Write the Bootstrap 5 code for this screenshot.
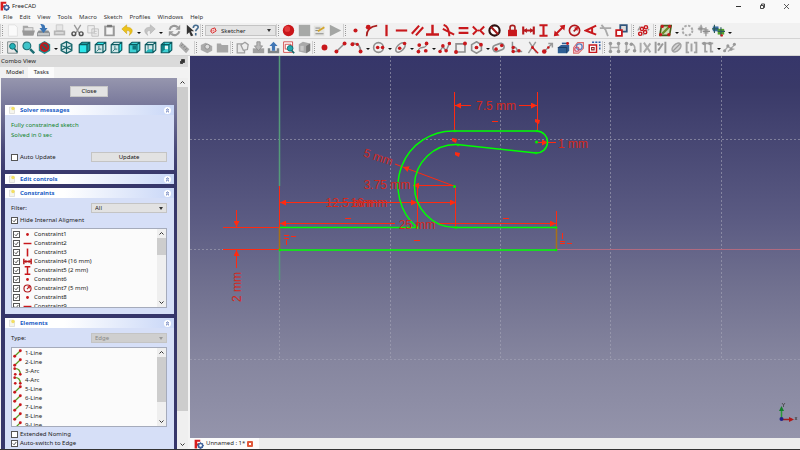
<!DOCTYPE html>
<html lang="en">
<head>
<meta charset="utf-8">
<meta name="viewport" content="width=device-width, initial-scale=1">
<title>FreeCAD</title>
<link href="https://cdn.jsdelivr.net/npm/bootstrap@5.3.0/dist/css/bootstrap.min.css" rel="stylesheet">
<style>
body{font-family:"Noto Sans","Open Sans",sans-serif;font-size:6px;line-height:9px;color:#222;background:#f9f9f9}
.app{height:100vh;border-bottom:1px solid #333}
.title-bar{height:12px;gap:2px;padding-right:2px}
.win-btn{width:24px;height:12px}
.win-btn svg{width:7px;height:7px}
.menu-bar{height:11px;gap:7px;padding-left:3px}
.menu-bar a{color:#333;text-decoration:none}
.toolbar{background:#f1f1f1;height:17px;border-bottom:1px solid #d4d4d4}
.toolbar.first{height:16px}
.tool-group{display:flex;flex:none}
.tool-group .btn{flex:1 1 0;display:flex;align-items:center;justify-content:center;line-height:0}
.tool-group svg{width:13px;height:13px}
.span-1{width:15px}.span-2{width:31px}.span-3{width:47px}.span-4{width:62px}.span-5{width:77px}
.span-6{width:93px}.span-7{width:108px}.span-8{width:124px}.span-10{width:154px}
.caret-btn{width:7px;flex:none;line-height:0}
.caret-btn::after{content:"";display:inline-block;border:2px solid transparent;border-top-color:#111;border-bottom:0}
.tool-gap{width:3px;flex:none}
.tool-pad{width:2px;flex:none}
.grip{width:5px;flex:none;height:13px;border-left:1px solid #d0d0d0}
.grip::after{content:"";display:block;height:11px;margin:1px 0 0 1px;border-left:1px dotted #999}
.wb{width:71px;height:11px;flex:none;background:#e4e4e4;border:1px solid #c4c4c4}
.plain-select{appearance:none;border:0;background:transparent;color:#222;font-size:6px;line-height:8px;padding:0;min-width:0;outline:0}
.drop{width:0;height:0;border:2px solid transparent;border-top:3px solid #333;border-bottom:0;flex:none}
.side{width:190px;background:#f3f3f3;padding-right:2px}
.side-head{background:#dadada;height:11px;padding:0 3px 0 1px}
.side-tabs{height:11px;background:#f2f2f2}
.side-tabs button{border:0;background:transparent;padding:0 4px 0 6px;line-height:11px;color:#222}
.side-tabs button.on{background:#fbfbfb;padding:0 5px 0 6px}
.task-area{margin-left:1px;padding:8px 3px 0 4px;background:linear-gradient(#9696ae 0,#8080a0 20px,#4a4a7a 70px,#36366a 100px)}
.flat-btn{background:#e3e3e3;border:1px solid #c8c8c8;color:#111;font-size:6px;line-height:9px;padding:0;border-radius:0}
.close-btn{width:38px;margin-left:65px}
.panel-box{margin-bottom:4px}
.panel-head{height:10px;background:linear-gradient(90deg,#fff 0 35%,#c9d7f7);color:#215dc6;font-weight:700;padding:0 3px;gap:4px}
.panel-head svg{width:8px;height:8px}
.panel-head button{width:7px;height:7px;border:0;border-radius:50%;background:#fff;padding:0;line-height:0}
.panel-head button svg{width:5px;height:5px;display:block;margin:auto}
.panel-main{background:#d6dff7;padding:5px 7px 6px 6px}
.solver-main{padding-bottom:8px}
.tick-row{display:flex;align-items:center;gap:2px}
.tick-row.hide-row{margin:3px 0}
.tick-row.after-list{margin-top:3px}
.ok-text{color:#11852b;line-height:10px}
.tick{appearance:none;width:7px;height:7px;flex:none;border:1px solid #555;background:#fff;margin:0}
.tick:checked{background:#fff url("data:image/svg+xml,%3Csvg xmlns='http://www.w3.org/2000/svg' viewBox='0 0 7 7'%3E%3Cpath d='M1.5 3.5 3 5 5.6 1.7' fill='none' stroke='%23222' stroke-width='.9'/%3E%3C/svg%3E") center/6px}
.field{width:76px;height:10px;background:#e2e2e2;border:1px solid #c4c4c4;padding:0 3px}
.field.off{background:#cfcfcf}.field.off select{color:#888}.field.off .drop{border-top-color:#999}
.list-box{height:80px;border:1px solid #a5abbb;background:#fbfbfb}
.list-box ul{padding:1px 0 0 1px}
.list-box li{height:9px;gap:3px}
.list-box label{display:flex;align-items:center;gap:2px}
.list-box svg.ico{width:9px;height:9px;flex:none}
.scroll{width:9px;background:#efefef;flex:none}
.scroll svg{width:9px;height:9px;flex:none}
.thumb{background:#cdcdcd;flex:none}
.thumb.short{height:17px}.thumb.mid{height:45px}
.main-scroll{width:11px;background:#efefef}
.main-scroll svg{width:9px;height:9px;margin:0 auto}
.main-scroll .thumb{flex:0 1 324px}
.canvas{background:linear-gradient(#36366a,#393968 8%,#5a5a82 42%,#70708f 60%,#86869f 80%,#9494ab)}
.canvas svg{display:block}
.doc-tabs{height:11px;background:#ededed}
.doc-tab{background:#fbfbfb;padding:0 6px 0 4px;gap:2px;color:#222}
.doc-tab button{width:6px;height:6px;border:0;border-radius:1px;background:#e0593c;padding:0;line-height:0}
.logo{width:10px;height:10px}
.dim{font:12px "Liberation Sans",Arial,sans-serif;fill:#d4281c;text-anchor:middle}
</style>
<script src="https://cdn.jsdelivr.net/npm/bootstrap@5.3.0/dist/js/bootstrap.bundle.min.js"></script>
</head>
<body>
<svg class="d-none" aria-hidden="true">
<defs>
<g id="cube"><path d="M1.500 4.500 5 1.500h9.500v9.500L11 14.500H1.500z" fill="#3fd0d4"/></g>
<g id="cubeline" fill="none" stroke="#0b5a60" stroke-width="1.400"><path d="M1.500 4.500 5 1.500h9.500v9.500L11 14.500H1.500zM1.500 4.500H11v10M11 4.500l3.500-3"/></g>
</defs>
<symbol id="i-logo" viewBox="0 0 16 16"><path d="M1 1h9v3.500H5V7h3v3H5v5H1z" fill="#d81e1e"/><circle cx="10.500" cy="10.500" r="3.400" fill="none" stroke="#42639c" stroke-width="2.600"/><path d="M10.500 5v11M5 10.500h11M6.600 6.600l7.800 7.800M14.400 6.600l-7.800 7.800" stroke="#42639c" stroke-width="1.400"/><circle cx="10.500" cy="10.500" r="2" fill="#fff"/></symbol>
<symbol id="i-new" viewBox="0 0 16 16"><path d="M3 1h8l3 3v11H3z" fill="#fafafa" stroke="#dcdcdc"/></symbol>
<symbol id="i-open" viewBox="0 0 16 16"><path d="M1 2h6l1 2h6v10H1z" fill="#a8a8a8"/><path d="M3 5h10v4H3z" fill="#ddd"/><path d="M0 8h16l-2 6H2z" fill="#989898"/></symbol>
<symbol id="i-save" viewBox="0 0 16 16"><path d="M2 8h12l2 3v4H0v-4z" fill="#8b8f92"/><path d="M1 11h14v3H1z" fill="#c2c5c6"/><path d="M4 0c4 0 6 1 6 5h3l-5 6-5-6h3c0-2-1-3-2-5z" fill="#3a74b4"/></symbol>
<symbol id="i-print" viewBox="0 0 16 16"><path d="M4 1h8v7H4z" fill="#e6e6e6" stroke="#c5c5c5"/><path d="M1 8h14v6H1z" fill="#b5b5b5"/><path d="M3 10h10v2H3z" fill="#ddd"/></symbol>
<symbol id="i-cut" viewBox="0 0 16 16"><path d="M4 1l6 10M12 1 6 11" stroke="#999" stroke-width="1.600"/><g fill="none" stroke="#555" stroke-width="1.800"><circle cx="3.500" cy="12" r="2.300"/><circle cx="12.500" cy="12" r="2.300"/></g></symbol>
<symbol id="i-copy" viewBox="0 0 16 16"><path d="M1 2h8v9H1zM6 6h8v9H6z" fill="#eee" stroke="#b9b9b9"/><path d="M8 9h4M8 12h4" stroke="#bbb"/></symbol>
<symbol id="i-paste" viewBox="0 0 16 16"><path d="M1.500 2h13v13h-13z" fill="#999"/><path d="M4 4h8v9H4z" fill="#f5f5f5"/><path d="M5 1h6v3H5z" fill="#777"/></symbol>
<symbol id="i-undo" viewBox="0 0 16 16"><path d="M7 1 1 6l6 6V8c4 0 5 2 3 6 6-4 5-10-3-10z" fill="#ecc21a" stroke="#c79b08" stroke-width=".6"/></symbol>
<symbol id="i-redo" viewBox="0 0 16 16"><path d="M9 1l6 5-6 6V8c-4 0-5 2-3 6C0 10 1 4 9 4z" fill="#c4c4c4" stroke="#aaa" stroke-width=".6"/></symbol>
<symbol id="i-refresh" viewBox="0 0 16 16"><path d="M2 7a6 6 0 0 1 10-3M14 9a6 6 0 0 1-10 3" fill="none" stroke="#999" stroke-width="2.600"/><path d="M15 1v6H9zM1 15V9h6z" fill="#999"/></symbol>
<symbol id="i-help" viewBox="0 0 16 16"><path d="M1 1l9 8H6l3 5-3 1-2-5-3 3z" fill="#333"/><path d="M9 5c0-5 6-4 6-1 0 2-3 2-3 5M12 11v3" fill="none" stroke="#456c90" stroke-width="2"/></symbol>
<symbol id="i-sketcher" viewBox="0 0 16 16"><path d="M3 5l8-3 3 7-8 5-4-3z" fill="#fff" stroke="#d32020" stroke-width="2.200"/><path d="M2 9h7V5" fill="none" stroke="#d32020" stroke-width="1.500"/></symbol>
<symbol id="i-record" viewBox="0 0 16 16"><circle cx="8" cy="8" r="7" fill="#c91519"/><circle cx="6.500" cy="6" r="3.500" fill="#e2383a"/></symbol>
<symbol id="i-stop" viewBox="0 0 16 16"><path d="M1 1h14v14H1z" fill="#a7a9a7"/></symbol>
<symbol id="i-edit" viewBox="0 0 16 16"><path d="M1 2h13v13H1z" fill="#e4e4e0"/><path d="M3 5h6M3 8h4M3 12h10" stroke="#777"/><path d="M6 9l8-5" stroke="#d4a52c" stroke-width="2.200"/></symbol>
<symbol id="i-play" viewBox="0 0 16 16"><path d="M1 1l14 7-14 7z" fill="#a4a6a4"/></symbol>
<symbol id="i-pt" viewBox="0 0 16 16"><circle cx="8" cy="8" r="2.500" fill="#c8181c"/></symbol>
<symbol id="i-ptbig" viewBox="0 0 16 16"><circle cx="8" cy="8" r="3.600" fill="#c8181c"/></symbol>
<symbol id="i-onobj" viewBox="0 0 16 16"><path d="M2 15C2 8 6 3 15 2" fill="none" stroke="#a81c1c" stroke-width="2"/><circle cx="4" cy="4" r="3" fill="#c8181c"/></symbol>
<symbol id="i-vert" viewBox="0 0 16 16"><path d="M8 1v14" stroke="#c8181c" stroke-width="2.800"/></symbol>
<symbol id="i-hor" viewBox="0 0 16 16"><path d="M1 8h14" stroke="#c8181c" stroke-width="2.600"/></symbol>
<symbol id="i-par" viewBox="0 0 16 16"><path d="M1 12 10 2M6 14l9-10" stroke="#c8181c" stroke-width="2.600"/></symbol>
<symbol id="i-perp" viewBox="0 0 16 16"><path d="M8 1v12M0 13h16" stroke="#c8181c" stroke-width="3"/></symbol>
<symbol id="i-tan" viewBox="0 0 16 16"><path d="M2 1c6 2 7 7 7 14M1 6l14 7" fill="none" stroke="#c8181c" stroke-width="2.400"/></symbol>
<symbol id="i-eq" viewBox="0 0 16 16"><path d="M2 5h12M2 11h12" stroke="#c8181c" stroke-width="2.800"/></symbol>
<symbol id="i-sym" viewBox="0 0 16 16"><path d="M1 3l5 5-5 5M15 3l-5 5 5 5" fill="none" stroke="#c8181c" stroke-width="2.400"/><circle cx="8" cy="8" r="1.200" fill="#c8181c"/></symbol>
<symbol id="i-block" viewBox="0 0 16 16"><circle cx="8" cy="8" r="6.300" fill="#fff" stroke="#2c1010" stroke-width="2.600"/><path d="M3.500 3.500l9 9" stroke="#a31818" stroke-width="2.600"/></symbol>
<symbol id="i-lock" viewBox="0 0 16 16"><path d="M5 8V4c0-3 6-3 6 0v4" fill="none" stroke="#a81c1c" stroke-width="2"/><path d="M2.500 7h11v8h-11z" fill="#c8181c"/></symbol>
<symbol id="i-hd" viewBox="0 0 16 16"><path d="M1.500 3v10M14.500 3v10M2 8h12" stroke="#b8181c" stroke-width="2.600"/><path d="M2 8l4-3v6zM14 8l-4-3v6z" fill="#b8181c"/></symbol>
<symbol id="i-vd" viewBox="0 0 16 16"><path d="M3 1.500h10M3 14.500h10M8 2v12" stroke="#c8181c" stroke-width="2.600"/></symbol>
<symbol id="i-dist" viewBox="0 0 16 16"><path d="M4 12l8-8" stroke="#c8181c" stroke-width="2.400"/><path d="M1 15l1-7 6 6zM15 1l-1 7-6-6z" fill="#c8181c"/></symbol>
<symbol id="i-rad" viewBox="0 0 16 16"><circle cx="8" cy="8" r="6.300" fill="none" stroke="#b0181c" stroke-width="2"/><path d="M7 9l4-4" stroke="#b0181c" stroke-width="2"/><path d="M12.500 3.500l-1 5-4-4z" fill="#c8181c"/></symbol>
<symbol id="i-ang" viewBox="0 0 16 16"><path d="M15 2 2 8l13 5M10 5v6" fill="none" stroke="#c8181c" stroke-width="2.400"/></symbol>
<symbol id="i-snell" viewBox="0 0 16 16"><path d="M1 5h14M3 1l5 6 3 8" fill="none" stroke="#a9a9a9" stroke-width="2.200"/></symbol>
<symbol id="i-toggle" viewBox="0 0 16 16"><path d="M6.500 1.500h8v8h-8z" fill="#ddd" stroke="#31557c" stroke-width="2.200"/><path d="M1.500 7.500h7v7h-7z" fill="#fff" stroke="#c8181c" stroke-width="2.200"/></symbol>
<symbol id="i-chain" viewBox="0 0 16 16"><g fill="none" stroke="#c8181c" stroke-width="1.800"><circle cx="11" cy="4" r="2"/><circle cx="6" cy="6" r="2"/><circle cx="10" cy="10" r="2"/><circle cx="4" cy="12" r="2"/></g><path d="M13 8l2-2M7 14l2-2M1 8l3-5" stroke="#999" stroke-width="1.500"/></symbol>
<symbol id="i-map" viewBox="0 0 16 16"><path d="M3 2h12l-2 12H1z" fill="#cfdcb8" stroke="#485d1c" stroke-width="2"/><path d="M4 12l8-8" stroke="#6b8c2c" stroke-width="3"/><g fill="#c8181c"><circle cx="4" cy="3" r="2"/><circle cx="13" cy="3" r="2"/><circle cx="12" cy="13" r="2"/><circle cx="2" cy="13" r="2"/></g></symbol>
<symbol id="i-ring" viewBox="0 0 16 16"><circle cx="8" cy="8" r="6" fill="none" stroke="#a9a9a9" stroke-width="2.400" stroke-dasharray="3 1.700"/></symbol>
<symbol id="i-swap" viewBox="0 0 16 16"><path d="M2 3h5v5H2zM8 6h6v6H8z" fill="#b5b5b5"/><path d="M1 6h9M5 1v10M7 9h9M11 4v11" stroke="#8f8f8f" stroke-width="1.500"/></symbol>
<symbol id="i-swapc" viewBox="0 0 16 16"><path d="M1 3h7v6H1z" fill="#3a6ea8"/><path d="M7 6h8v7H7z" fill="#55a02c"/><path d="M3 1v10M7 9h9M11 4v11M0 6h8" stroke="#2b5b5c" stroke-width="1.400"/><circle cx="12" cy="14" r="1.500" fill="#c8181c"/></symbol>
<symbol id="i-fit" viewBox="0 0 16 16"><path d="M2 1h12v14H2z" fill="#e8e8e8" stroke="#6e7a7a"/><circle cx="8" cy="6.500" r="3.600" fill="#23b2b8" stroke="#0b5a60"/><path d="M10.500 9.500 14 14" stroke="#0b5a60" stroke-width="2"/></symbol>
<symbol id="i-zoom" viewBox="0 0 16 16"><circle cx="6" cy="6" r="4.800" fill="#3fc4ca" stroke="#1c6e74" stroke-width="1.400"/><path d="M10 10l5 5" stroke="#1c6e74" stroke-width="3"/></symbol>
<symbol id="i-style" viewBox="0 0 16 16"><path d="M8 0l7 4v8l-7 4-7-4V4z" fill="#218b90"/><circle cx="8" cy="7.500" r="4.800" fill="#3a5a5c" stroke="#c2191d" stroke-width="2.200"/><path d="M4.500 4.500l7 6" stroke="#c2191d" stroke-width="2.200"/></symbol>
<symbol id="i-iso" viewBox="0 0 16 16"><path d="M8 .8l6.500 3.400v7.600L8 15.200l-6.500-3.400V4.200z" fill="#d4e9ea" stroke="#17656b" stroke-width="1.700"/><path d="M8 1v14M1.500 5.500 8 8l6.500-2.500M1.500 11 8 8l6.500 3" fill="none" stroke="#17656b" stroke-width="1.400"/></symbol>
<symbol id="i-front" viewBox="0 0 16 16"><path d="M1.500 4.500 5 1.500h9.500v9.500L11 14.500H1.500z" fill="#1a9a9f"/><path d="M1.500 4.500H11v10H1.500z" fill="#2ee6ea"/><use href="#cubeline"/></symbol>
<symbol id="i-top" viewBox="0 0 16 16"><path d="M1.500 4.500 5 1.500h9.500v9.500L11 14.500H1.500z" fill="#cfe6e7"/><path d="M1.500 4.500 5 1.500h9.500l-3.500 3z" fill="#2ee6ea"/><use href="#cubeline"/><path d="M3 13l3-3V6M6 10h3" stroke="#17656b" fill="none"/></symbol>
<symbol id="i-right" viewBox="0 0 16 16"><path d="M1.500 4.500 5 1.500h9.500v9.500L11 14.500H1.500z" fill="#cfe6e7"/><path d="M11 4.500l3.500-3v9.500L11 14.500z" fill="#2ee6ea"/><use href="#cubeline"/><path d="M3 13l3-3V6M6 10h3" stroke="#17656b" fill="none"/></symbol>
<symbol id="i-rear" viewBox="0 0 16 16"><use href="#cube"/><path d="M5.500 5.500H10v5H5.500z" fill="#0d767b"/><use href="#cubeline"/></symbol>
<symbol id="i-bottom" viewBox="0 0 16 16"><path d="M1.500 4.500 5 1.500h9.500v9.500L11 14.500H1.500z" fill="#d3e8e9"/><path d="M1.500 14.500 5 10h6v4.500z" fill="#25b8bd"/><use href="#cubeline"/><path d="M5 10V5" stroke="#17656b"/></symbol>
<symbol id="i-left" viewBox="0 0 16 16"><use href="#cube"/><path d="M2 14V5l4-3v8z" fill="#0e8589"/><path d="M6 6h4v4H6z" fill="#e5f4f4"/><use href="#cubeline"/></symbol>
<symbol id="i-measure" viewBox="0 0 16 16"><path d="M4 1l10 9-4 5L1 6z" fill="#aaa"/><path d="M6 4L4 6M9 6 7 8M11 9l-2 2" stroke="#777"/></symbol>
<symbol id="i-part" viewBox="0 0 16 16"><path d="M1 5l6-3 8 4v6l-6 3-8-4z" fill="#aaa"/><circle cx="9" cy="7" r="3" fill="#ddd" stroke="#888"/></symbol>
<symbol id="i-folder" viewBox="0 0 16 16"><path d="M1 3h5l1 2h8v9H1z" fill="#a6a6a6"/></symbol>
<symbol id="i-nsk" viewBox="0 0 16 16"><path d="M1.500 3.500h9v11h-9z" fill="#e8e8e8" stroke="#a0a0a0" stroke-width="1.600"/><path d="M6 5l5-3.500 4 3-1 6-5 1z" fill="#eee" stroke="#a0a0a0" stroke-width="1.600"/></symbol>
<symbol id="i-edsk" viewBox="0 0 16 16"><path d="M1 9h14v6H1z" fill="#a0a0a0"/><path d="M6 1h4v5h3l-5 6-5-6h3z" fill="#b8b8b8" stroke="#8a8a8a"/></symbol>
<symbol id="i-leave" viewBox="0 0 16 16"><path d="M1 9h3v3h8V9h3v6H1z" fill="#7f8587"/><path d="M8 1l5 5h-3v6H6V6H3z" fill="#4177b5"/></symbol>
<symbol id="i-view" viewBox="0 0 16 16"><path d="M2 1h11v13H2z" fill="#fff" stroke="#c33"/><path d="M4 4h7v6H4z" fill="none" stroke="#c33"/><circle cx="10" cy="9" r="3.500" fill="#24a9ae" stroke="#0e6267"/><path d="M12 12l3 3" stroke="#0e6267" stroke-width="2"/></symbol>
<symbol id="i-sect" viewBox="0 0 16 16"><path d="M1 4l5-3 9 2v9l-5 3-9-2z" fill="#aaa"/><path d="M10 6v9l5-3V3z" fill="#777"/><path d="M3 6h4v6H3z" fill="#c9c9c9"/></symbol>
<symbol id="i-line" viewBox="0 0 16 16"><path d="M3 13 13 3" stroke="#8f8f8f" stroke-width="1.800"/><circle cx="3" cy="13" r="2.400" fill="#c8181c"/><circle cx="13" cy="3" r="2.400" fill="#c8181c"/></symbol>
<symbol id="i-arc" viewBox="0 0 16 16"><path d="M3 3c7-1 10 4 10 10" fill="none" stroke="#8f8f8f" stroke-width="2"/><g fill="#c8181c"><circle cx="3" cy="4" r="2.400"/><circle cx="9" cy="4" r="2"/><circle cx="13" cy="13" r="2.400"/></g></symbol>
<symbol id="i-gline" viewBox="0 0 16 16"><path d="M3 13 13 3" stroke="#5a9a20" stroke-width="2.200"/><circle cx="3" cy="13" r="2.600" fill="#c8181c"/><circle cx="13" cy="3" r="2.600" fill="#c8181c"/></symbol>
<symbol id="i-garc" viewBox="0 0 16 16"><path d="M3 3c7-1 10 4 10 10" fill="none" stroke="#5a9a20" stroke-width="2.200"/><g fill="#c8181c"><circle cx="3" cy="3" r="2.400"/><circle cx="4" cy="13" r="2.400"/><circle cx="13" cy="13" r="2.400"/></g></symbol>
<symbol id="i-circle" viewBox="0 0 16 16"><circle cx="8" cy="8" r="6" fill="none" stroke="#8f8f8f" stroke-width="2"/><circle cx="7" cy="8" r="2.200" fill="#c8181c"/><circle cx="13" cy="8" r="2.200" fill="#c8181c"/></symbol>
<symbol id="i-ellipse" viewBox="0 0 16 16"><ellipse cx="8" cy="8" rx="7" ry="4" transform="rotate(-45 8 8)" fill="none" stroke="#8f8f8f" stroke-width="2"/><g fill="#c8181c"><circle cx="13" cy="3" r="2.200"/><circle cx="7" cy="9" r="2.200"/></g></symbol>
<symbol id="i-spline" viewBox="0 0 16 16"><path d="M3 13C3 4 13 12 13 3" fill="none" stroke="#8f8f8f" stroke-width="1.600"/><g fill="#c8181c"><circle cx="3" cy="13" r="2.300"/><circle cx="13" cy="3" r="2.300"/><circle cx="4" cy="5" r="2.300"/><circle cx="12" cy="12" r="2.300"/></g></symbol>
<symbol id="i-poly" viewBox="0 0 16 16"><path d="M2 13l4-6 4 5 4-9" fill="none" stroke="#8f8f8f" stroke-width="1.800"/><g fill="#c8181c"><circle cx="2.500" cy="13" r="2.200"/><circle cx="6" cy="6" r="2.200"/><circle cx="10" cy="12" r="2.200"/><circle cx="14" cy="3" r="2.200"/></g></symbol>
<symbol id="i-rect" viewBox="0 0 16 16"><path d="M2.500 3.500h11v10h-11z" fill="none" stroke="#8f8f8f" stroke-width="2"/><circle cx="13.500" cy="3" r="2.400" fill="#c8181c"/><circle cx="2.500" cy="13.500" r="2.400" fill="#c8181c"/></symbol>
<symbol id="i-hex" viewBox="0 0 16 16"><path d="M8 1l6 3.500v7L8 15l-6-3.500v-7z" fill="none" stroke="#8f8f8f" stroke-width="2"/><circle cx="8" cy="8" r="2.300" fill="#c8181c"/><circle cx="13.500" cy="4.500" r="2.300" fill="#c8181c"/></symbol>
<symbol id="i-slot" viewBox="0 0 16 16"><rect x="1" y="4" width="14" height="8" rx="4" transform="rotate(-20 8 8)" fill="none" stroke="#8f8f8f" stroke-width="2"/><circle cx="5" cy="10" r="2.200" fill="#c8181c"/><circle cx="12" cy="5.500" r="2.200" fill="#c8181c"/></symbol>
<symbol id="i-fillet" viewBox="0 0 16 16"><path d="M3 1v12h12M3 7c4 0 6 2 6 6" fill="none" stroke="#8f8f8f" stroke-width="1.800"/><circle cx="4" cy="8" r="2.100" fill="#c8181c"/><circle cx="4" cy="13" r="2.100" fill="#c8181c"/><circle cx="11" cy="12" r="2.100" fill="#c8181c"/></symbol>
<symbol id="i-trim" viewBox="0 0 16 16"><path d="M3 15 12 1M13 15 4 1" stroke="#999" stroke-width="1.800"/><path d="M8 8l7 7" stroke="#c8181c" stroke-width="1.600"/><circle cx="8" cy="8" r="1.800" fill="#c8181c"/></symbol>
<symbol id="i-extend" viewBox="0 0 16 16"><path d="M4 13 13 4M9 3h5v5" fill="none" stroke="#999" stroke-width="1.800"/><circle cx="4" cy="13" r="2.800" fill="#c8181c"/><circle cx="9" cy="8" r="1.600" fill="#c8181c"/></symbol>
<symbol id="i-ext" viewBox="0 0 16 16"><path d="M1 8l4-3h10v7l-3 3H1z" fill="#2f5f94"/><path d="M1 8h11v7" fill="none" stroke="#17365a"/><path d="M6 3h8" stroke="#2f5f94" stroke-width="2"/><circle cx="13" cy="3" r="1.800" fill="#c8181c"/></symbol>
<symbol id="i-carbon" viewBox="0 0 16 16"><path d="M2 8l5-6h7v7l-6 6H2z" fill="#f3e6ec" stroke="#dd6b6b" stroke-width="1.400"/><circle cx="9" cy="7" r="3.500" fill="none" stroke="#5a80c0" stroke-width="1.600"/><circle cx="6" cy="10" r="2.600" fill="none" stroke="#d0506a" stroke-width="1.400"/></symbol>
<symbol id="i-constr" viewBox="0 0 16 16"><path d="M5 1.500h9.500V11" fill="none" stroke="#2c5fa8" stroke-width="1.800" stroke-dasharray="2.500 1.500"/><path d="M1.500 5h9v9h-9z" fill="#fff" stroke="#c8181c" stroke-width="1.800"/><path d="M4.500 8h3v3h-3z" fill="none" stroke="#8a2020" stroke-width="1.400"/></symbol>
<symbol id="i-g1" viewBox="0 0 16 16"><path d="M3 2v12M13 2v12M3 8h10" stroke="#aaa" stroke-width="2"/><g fill="#999"><circle cx="3" cy="3" r="2.200"/><circle cx="13" cy="3" r="2.200"/><circle cx="3" cy="13" r="2.200"/><circle cx="13" cy="13" r="2.200"/></g></symbol>
<symbol id="i-g2" viewBox="0 0 16 16"><path d="M3 2v12M3 13l4-3M9 3c4 1 5 5 4 9" fill="none" stroke="#aaa" stroke-width="2"/><g fill="#999"><circle cx="3" cy="3" r="2.200"/><circle cx="9" cy="4" r="2.200"/><circle cx="3" cy="13" r="2.200"/><circle cx="13" cy="12" r="2.200"/></g></symbol>
<symbol id="i-g3" viewBox="0 0 16 16"><path d="M2 2v12M6 2l8 12M6 14l8-11" stroke="#aaa" stroke-width="2.400"/></symbol>
<symbol id="i-g4" viewBox="0 0 16 16"><path d="M2 1v14M14 1v14M5 12l6-9" stroke="#999" stroke-width="2.400"/><circle cx="6" cy="4" r="1.800" fill="#999"/></symbol>
<symbol id="i-g5" viewBox="0 0 16 16"><ellipse cx="8" cy="8" rx="6.500" ry="4" transform="rotate(-45 8 8)" fill="#d5d5d5" stroke="#a3a3a3" stroke-width="2"/><path d="M4 12l8-8" stroke="#999" stroke-width="1.500"/></symbol>
<symbol id="i-g6" viewBox="0 0 16 16"><path d="M5 2H2v12h3M11 2h3v12h-3M8 3v10" fill="none" stroke="#a2a2a2" stroke-width="2.400"/></symbol>
<symbol id="i-g7" viewBox="0 0 16 16"><path d="M1 3h14M5 3v10h3M12 3v10h3" fill="none" stroke="#a2a2a2" stroke-width="2.200"/><circle cx="4" cy="3" r="2.200" fill="#999"/><circle cx="11" cy="3" r="2.200" fill="#999"/></symbol>
<symbol id="i-g8" viewBox="0 0 16 16"><path d="M2 12l4-5 4 2 5-5M6 13l4-3 4 0" fill="none" stroke="#aaa" stroke-width="1.600"/><g fill="#999"><circle cx="2" cy="12" r="1.900"/><circle cx="6" cy="6" r="1.900"/><circle cx="10" cy="10" r="1.900"/><circle cx="14" cy="4" r="1.900"/></g></symbol>
<symbol id="i-note" viewBox="0 0 16 16"><path d="M3 2h8l2 2v11H3z" fill="#f5f5ee" stroke="#c9c9c9"/><circle cx="10" cy="5" r="3.500" fill="#f3df62"/></symbol>
<symbol id="i-fold" viewBox="0 0 10 10"><path d="M2 4.500 5 2l3 2.500M2 8.500 5 6l3 2.500" fill="none" stroke="#21409c" stroke-width="1.500"/></symbol>
<symbol id="i-up" viewBox="0 0 9 9"><path d="M2.500 5.500 4.500 3.500l2 2" fill="none" stroke="#333"/></symbol>
<symbol id="i-down" viewBox="0 0 9 9"><path d="M2.500 3.500l2 2 2-2" fill="none" stroke="#333"/></symbol>
</svg>

<div class="app d-flex flex-column overflow-hidden">
  <header class="title-bar d-flex align-items-center flex-shrink-0">
    <svg class="logo"><use href="#i-logo"/></svg><span>FreeCAD</span>
    <div class="ms-auto d-flex">
      <button class="btn p-0 border-0 win-btn d-flex align-items-center justify-content-center" aria-label="Minimize"><svg viewBox="0 0 7 7"><path d="M1 3.500h5" stroke="#333"/></svg></button>
      <button class="btn p-0 border-0 win-btn d-flex align-items-center justify-content-center" aria-label="Restore"><svg viewBox="0 0 7 7"><path d="M1.500 2.500h3v3h-3zM2.500 2V1h3v3.500H5" fill="none" stroke="#333" stroke-width=".9"/></svg></button>
      <button class="btn p-0 border-0 win-btn d-flex align-items-center justify-content-center" aria-label="Exit"><svg viewBox="0 0 7 7"><path d="M1 1l5 5M6 1 1 6" stroke="#333" stroke-width=".8"/></svg></button>
    </div>
  </header>
  <nav class="menu-bar d-flex align-items-center flex-shrink-0">
    <a href="#">File</a><a href="#">Edit</a><a href="#">View</a><a href="#">Tools</a><a href="#">Macro</a><a href="#">Sketch</a><a href="#">Profiles</a><a href="#">Windows</a><a href="#">Help</a>
  </nav>
  <div class="toolbar first d-flex align-items-center flex-shrink-0" role="toolbar" aria-label="File and constraints">
    <div class="d-flex align-items-center" data-tools="grip new+open+save+print gap cut+copy+paste gap undo caret redo caret gap refresh gap help grip"></div>
    <div class="wb d-flex align-items-center px-1 gap-1"><svg width="7" height="7"><use href="#i-sketcher"/></svg><select class="plain-select flex-grow-1" aria-label="Workbench"><option>Sketcher</option></select><span class="drop"></span></div>
    <div class="d-flex align-items-center" data-tools="grip record+stop+edit+play grip pt+onobj+vert+hor+par+perp+tan+eq+sym+block gap lock+hd+vd+dist+rad+ang+snell+toggle pad grip chain pad grip map caret ring+swap swapc caret"></div>
  </div>
  <div class="toolbar d-flex align-items-center flex-shrink-0" role="toolbar" aria-label="View and geometry">
    <div class="d-flex align-items-center" data-tools="grip fit+zoom+style caret iso gap front+top+right gap rear+bottom+left gap measure pad grip part+folder grip nsk+edsk+leave+view+sect grip ptbig+line+arc caret circle caret ellipse caret spline caret poly+rect+hex caret slot gap fillet+trim+extend+ext+carbon+constr grip g1+g2+g3+g4+g5+g6+g7 caret g8"></div>
  </div>

  <div class="d-flex flex-grow-1 overflow-hidden">
    <aside class="side d-flex flex-column flex-shrink-0">
      <div class="side-head d-flex align-items-center justify-content-between flex-shrink-0"><span>Combo View</span><svg width="5" height="5" viewBox="0 0 5 5"><path d="M1.500.5h3v3h-3zM.5 2v2.500H3" fill="#333" stroke="#333" stroke-width=".8"/></svg></div>
      <div class="side-tabs d-flex flex-shrink-0"><button type="button">Model</button><button type="button" class="on">Tasks</button></div>
      <div class="d-flex flex-grow-1 overflow-hidden">
        <div class="task-area flex-grow-1 overflow-hidden">
          <button class="flat-btn close-btn d-block mb-2" type="button">Close</button>
          <section class="panel-box">
            <div class="panel-head d-flex align-items-center"><svg><use href="#i-note"/></svg><span class="flex-grow-1">Solver messages</span><button type="button" aria-label="Collapse"><svg><use href="#i-fold"/></svg></button></div>
            <div class="panel-main solver-main">
              <div class="ok-text">Fully constrained sketch</div><div class="ok-text">Solved in 0 sec</div>
              <div class="d-flex align-items-center justify-content-between mt-2 pt-1"><label class="tick-row" for="au"><input class="tick" type="checkbox" id="au">Auto Update</label><button type="button" class="flat-btn field">Update</button></div>
            </div>
          </section>
          <section class="panel-box">
            <div class="panel-head d-flex align-items-center"><svg><use href="#i-note"/></svg><span class="flex-grow-1">Edit controls</span><button type="button" aria-label="Expand"><svg><use href="#i-fold"/></svg></button></div>
          </section>
          <section class="panel-box">
            <div class="panel-head d-flex align-items-center"><svg><use href="#i-note"/></svg><span class="flex-grow-1">Constraints</span><button type="button" aria-label="Collapse"><svg><use href="#i-fold"/></svg></button></div>
            <div class="panel-main">
              <div class="d-flex align-items-center justify-content-between"><label for="flt">Filter:</label><div class="field d-flex align-items-center"><select class="plain-select flex-grow-1" id="flt"><option>All</option></select><span class="drop"></span></div></div>
              <label class="tick-row hide-row" for="hia"><input class="tick" type="checkbox" id="hia" checked>Hide Internal Aligment</label>
              <div class="list-box d-flex"><ul class="list-unstyled mb-0 flex-grow-1 overflow-hidden" id="constraints"></ul><div class="scroll d-flex flex-column"><svg><use href="#i-up"/></svg><div class="thumb short"></div><svg class="mt-auto"><use href="#i-down"/></svg></div></div>
            </div>
          </section>
          <section>
            <div class="panel-head d-flex align-items-center"><svg><use href="#i-note"/></svg><span class="flex-grow-1">Elements</span><button type="button" aria-label="Collapse"><svg><use href="#i-fold"/></svg></button></div>
            <div class="panel-main">
              <div class="d-flex align-items-center justify-content-between mb-1"><label for="typ">Type:</label><div class="field off d-flex align-items-center"><select class="plain-select flex-grow-1" id="typ" disabled><option>Edge</option></select><span class="drop"></span></div></div>
              <div class="list-box d-flex"><ul class="list-unstyled mb-0 flex-grow-1 overflow-hidden" id="elements"></ul><div class="scroll d-flex flex-column"><svg><use href="#i-up"/></svg><div class="thumb mid"></div><svg class="mt-auto"><use href="#i-down"/></svg></div></div>
              <label class="tick-row after-list" for="exn"><input class="tick" type="checkbox" id="exn">Extended Noming</label>
              <label class="tick-row mt-0 pt-0" for="ase"><input class="tick" type="checkbox" id="ase" checked>Auto-switch to Edge</label>
            </div>
          </section>
        </div>
        <div class="main-scroll d-flex flex-column flex-shrink-0"><svg class="flex-shrink-0"><use href="#i-up"/></svg><div class="thumb"></div><svg class="mt-auto flex-shrink-0"><use href="#i-down"/></svg></div>
      </div>
    </aside>
    <main class="d-flex flex-column flex-grow-1 overflow-hidden">
      <div class="canvas flex-grow-1 overflow-hidden">
        <svg width="100%" height="100%" viewBox="190 56 610 382" preserveAspectRatio="xMinYMin slice" role="img" aria-label="Sketch of a clip with dimensions">
          <defs><marker id="arrow" viewBox="0 0 6 6" refX="6" refY="3" markerWidth="6" markerHeight="6" markerUnits="userSpaceOnUse" orient="auto-start-reverse"><path d="M0 0 6 3 0 6z" fill="#ff2a10"/></marker></defs>
          <g stroke="#a6a6b8" stroke-width="1" stroke-dasharray="2 2" opacity=".6"><path d="M279.500 56v304M390.500 56v304M500.500 56v304M610.500 56v304M721.500 56v304M190 139.500h610M190 249.500h90M190 359.500h610"/></g>
          <path d="M279.500 56v130M279.500 249v31" stroke="#559a7a" stroke-width="1.500"/>
          <path d="M556 249.500h244" stroke="#b06a80"/>
          <g fill="none" stroke="#ff2a10" stroke-width="1">
            <path d="M279.500 186v42M223 227.500h57M223 249.500h57M455.500 187v40M417.500 186v42M454.500 92v39M537.500 92v39M556.500 211v38"/>
            <path d="M236.500 210v17" marker-end="url(#arrow)"/><path d="M236.500 268v-18" marker-end="url(#arrow)"/>
            <path d="M280 202.500h137" marker-start="url(#arrow)" marker-end="url(#arrow)"/><path d="M410 202.500h46" marker-end="url(#arrow)"/>
            <path d="M395 223.500H280" marker-end="url(#arrow)"/><path d="M439 223.500h117" marker-end="url(#arrow)"/>
            <path d="M471 105.500h-16" marker-end="url(#arrow)"/><path d="M519 105.500h18" marker-end="url(#arrow)"/>
            <path d="M454 186l-51-19" marker-end="url(#arrow)"/><path d="M403 167l-8-3"/><path d="M454 185.500h-41" marker-end="url(#arrow)"/>
            <path d="M537 142.500h11" marker-end="url(#arrow)"/><path d="M548 142.500h8"/>
            <path d="M345 218.500h6M503 218.500h6M414 240.500h6M492 121.500h6M286.500 240v5M284 235.500h5M284 238.500h5M562.500 233v6M560 241.500h5M560 243.500h5M291 236.500h5M567 243.500h5"/>
          </g>
          <g fill="#ff2a10"><path d="M535 119l5 1-1 4-4-2zM452 138l5 1-1 4-4-2zM455 152l5 1-1 4-4-2z"/></g>
          <path d="M279.500 227v23M556.500 227v23" stroke="#a87018" stroke-width="1.500"/>
          <g fill="none" stroke="#00ff00" stroke-width="1.500">
            <path d="M280 227.500h137A55 55 0 0 1 455 131h82a11 11 0 0 1-1 22l-79-8.500A41.500 41.500 0 1 0 455 227.500h101M280 250h276"/>
          </g>
          <g fill="#00f000"><circle cx="454.500" cy="186.500" r="1.500"/><circle cx="536.500" cy="142" r="1.500"/><circle cx="455" cy="131" r="1.300"/><circle cx="537" cy="131" r="1.300"/><circle cx="536" cy="153" r="1.300"/><circle cx="458" cy="145" r="1.300"/><circle cx="417" cy="227.500" r="1.300"/><circle cx="456" cy="227.500" r="1.300"/><circle cx="556" cy="227.500" r="1.300"/><circle cx="556" cy="250" r="1.300"/><circle cx="280" cy="250" r="1.300"/></g>
          <g class="dim">
            <text x="496" y="110">7.5 mm</text><text x="573" y="148">1 mm</text>
            <text transform="translate(377 161) rotate(18)">5 mm</text>
            <text x="387" y="189">3.75 mm</text>
            <text x="349" y="207">12.5 mm</text><text x="369" y="207">16 mm</text>
            <text x="417" y="229">25 mm</text>
            <text transform="translate(241 287) rotate(-90)">2 mm</text>
          </g>
          <path d="M781.500 419v-9" stroke="#2a9a3a" stroke-width="1.500"/><path d="M779 411l2.500-5 2.500 5z" fill="#14802a"/><path d="M782 419.500h10" stroke="#a02020" stroke-width="1.500"/><path d="M789 417l5 2.500-5 2.500z" fill="#b01818"/><circle cx="781.500" cy="419" r="2" fill="#22228a"/>
          <path d="M782 403l1.500 2 1.500-2M783.500 405v2M795 417l2 3M797 417l-2 3" stroke="#444" fill="none" stroke-width=".8"/>
        </svg>
      </div>
      <div class="doc-tabs d-flex flex-shrink-0"><div class="doc-tab d-flex align-items-center"><svg class="logo"><use href="#i-logo"/></svg><span>Unnamed : 1*</span><button type="button" aria-label="Close document"><svg width="4" height="4" viewBox="0 0 4 4"><path d="M1 1l2 2M3 1 1 3" stroke="#fff"/></svg></button></div></div>
    </main>
  </div>
</div>
<script>
const fixed={gap:'<span class="tool-gap"></span>',pad:'<span class="tool-pad"></span>',grip:'<span class="grip"></span>',caret:'<button type="button" class="btn p-0 border-0 caret-btn" aria-label="More"></button>'};
document.querySelectorAll('[data-tools]').forEach(bar=>{
  bar.innerHTML=bar.dataset.tools.split(' ').map(t=>{
    if(fixed[t])return fixed[t];
    const ids=t.split('+');
    return `<div class="tool-group span-${ids.length}">`+ids.map(i=>`<button type="button" class="btn p-0 border-0" aria-label="${i}"><svg><use href="#i-${i}"/></svg></button>`).join('')+'</div>';
  }).join('');
});
const cons=[['pt',''],['hor',''],['vert',''],['hd',' (16 mm)'],['vd',' (2 mm)'],['pt',''],['rad',' (5 mm)'],['pt',''],['hor','']];
document.getElementById('constraints').innerHTML=cons.map(([i,s],n)=>`<li class="d-flex align-items-center text-nowrap"><input class="tick" type="checkbox" checked id="c${n}"><label for="c${n}"><svg class="ico"><use href="#i-${i}"/></svg>Constraint${n+1}${s}</label></li>`).join('');
document.getElementById('elements').innerHTML=['Line','Line','Arc','Arc','Line','Line','Line','Line','Line'].map((k,n)=>`<li class="d-flex align-items-center"><svg class="ico"><use href="#i-g${k.toLowerCase()}"/></svg>${n+1}-${k}</li>`).join('');
</script>
</body>
</html>
